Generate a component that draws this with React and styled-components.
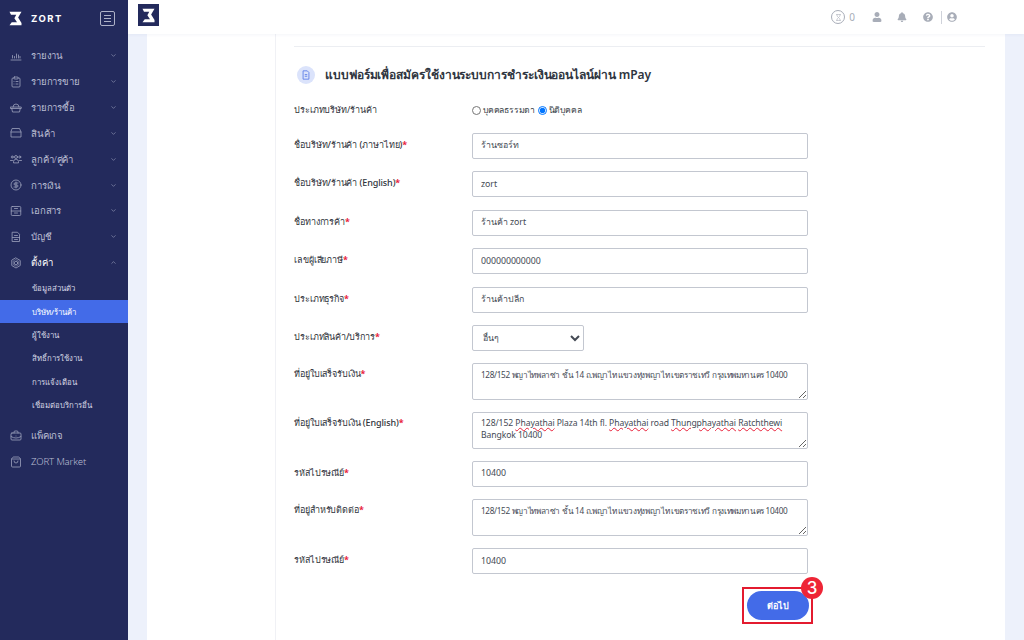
import React from 'react';
import styled, { createGlobalStyle } from 'styled-components';
import { FaUser, FaBell, FaQuestionCircle, FaUserCircle } from 'react-icons/fa';
import { ChevronDown, ChevronUp, ClipboardList, CircleDollarSign, BriefcaseBusiness, ShoppingBag, Hourglass } from 'lucide-react';

const Global = createGlobalStyle`
  html, body { margin: 0; height: 640px; overflow: hidden; background: #edf1fb; }
  * { box-sizing: border-box; }
  body, input, select, button { font-family: "Noto Sans", "Inter", sans-serif; }
`;
const Shell = styled.div`display: flex; width: 1024px; height: 640px; overflow: hidden;`;
const Sidebar = styled.aside`width: 128px; flex: none; background: #232a5c; color: #b9bdd2; display: flex; flex-direction: column;`;
const Brand = styled.div`height: 43px; display: flex; align-items: center; padding: 0 13px 6px 8px; flex: none;`;
const BrandName = styled.span`margin-left: 8px; font: 700 9.5px "Inter", sans-serif; letter-spacing: 1.5px; color: #fff; flex: 1;`;
const MenuToggle = styled.div`width: 15px; height: 15px; border: 1px solid #aeb2c8; border-radius: 2px; display: flex; flex-direction: column; justify-content: center; gap: 2px; padding: 0 3px;
  i { display: block; height: 1px; background: #aeb2c8; }`;
const Menu = styled.nav`display: flex; flex-direction: column;`;
const Item = styled.div`height: 25.85px; display: flex; align-items: center; padding: 0 11px 0 10px; font-size: 9.6px; letter-spacing: -.15px; color: ${p => p.$open ? '#fff' : '#b9bdd2'}; font-weight: ${p => p.$open ? 500 : 300};
  span { margin-left: 9px; flex: 1; white-space: nowrap; }
  svg { flex: none; color: #9da2bd; }`;
const Sub = styled.div`height: 23.4px; display: flex; align-items: center; padding-left: 32px; font-size: 7.8px; font-weight: 500; white-space: nowrap; color: ${p => p.$active ? '#fff' : '#d6d8e4'}; background: ${p => p.$active ? '#436be8' : 'transparent'};`;
const SubGroup = styled.div`display: flex; flex-direction: column; margin: 1px 0 6px;`;
const Main = styled.div`flex: 1; display: flex; flex-direction: column; min-width: 0;`;
const TopBar = styled.header`height: 34px; flex: none; background: #fff; display: flex; align-items: center; padding: 0 67px 0 10px; box-shadow: 0 1px 3px rgba(60,80,140,.06); position: relative; z-index: 1;`;
const TopLogo = styled.div`width: 21px; height: 22px; background: #232a5c; display: flex; align-items: center; justify-content: center; align-self: flex-start; margin-top: 4px;`;
const TopIcons = styled.div`margin-left: auto; display: flex; align-items: center; color: #a8adb8; font-size: 10px;`;
const Ring = styled.div`width: 14px; height: 14px; border: 1px solid #a8adb8; border-radius: 50%; display: flex; align-items: center; justify-content: center; margin-right: 4px;`;
const Count = styled.span`margin-right: 17px;`;
const Gap = styled.span`display: flex; margin-right: ${p => p.$m}px;`;
const Divider = styled.i`width: 1px; height: 13px; background: #cfd2da; margin-right: 5px;`;
const Content = styled.main`flex: 1; padding: 0 19px; min-height: 0;`;
const Card = styled.section`background: #fff; height: 100%; display: flex;`;
const Side = styled.div`width: 129px; flex: none; border-right: 1px solid #f0f1f5;`;
const Body = styled.div`flex: 1; padding: 12px 20px 0 18px;`;
const Rule = styled.div`height: 1px; background: #eceef2; margin-bottom: 17px;`;
const Title = styled.div`display: flex; align-items: center; margin: 0 0 13px 3px; height: 22px;`;
const Badge = styled.div`width: 18px; height: 18px; border-radius: 50%; background: #dbe3fb; color: #5577e6; display: flex; align-items: center; justify-content: center; margin-right: 10px;`;
const TitleText = styled.h2`margin: 0; font-size: 12px; line-height: 22px; font-weight: 600; letter-spacing: -.08px; color: #2f3540; white-space: nowrap;`;
const Form = styled.form`display: flex; flex-direction: column; gap: 12.4px;`;
const Row = styled.div`display: grid; grid-template-columns: 178px 336px; align-items: start; min-height: ${p => p.$h || 26}px; height: ${p => p.$h || 26}px;`;
const Label = styled.label`font-size: 9px; letter-spacing: -.1px; line-height: ${p => p.$lh || 22}px; color: #30343c; font-weight: ${p => p.$b ? 500 : 400}; white-space: nowrap;
  b { color: #e8213a; font-weight: 700; }`;
const Input = styled.input`width: 336px; height: 26px; border: 1px solid #c3c7d0; border-radius: 2px; padding: 0 8px 1px; font-size: 8.8px; letter-spacing: -.05px; color: #444a54; background: #fff; outline: none;`;
const Select = styled.select`width: 112px; height: 26px; border: 1px solid #c3c7d0; border-radius: 2px; padding: 0 6px; font-size: 8.8px; color: #444a54; background: #fff;`;
const Area = styled.div`width: 336px; height: 36.4px; border: 1px solid #c3c7d0; border-radius: 2px; padding: 4px 8px 0; font-size: ${p => p.$thai ? 8.2 : 8.6}px; letter-spacing: ${p => p.$thai ? -.34 : -.08}px; line-height: ${p => p.$thai ? 14 : 12}px; color: #444a54; resize: vertical; overflow: auto; background: #fff; white-space: ${p => p.$thai ? 'nowrap' : 'normal'};
  u { text-decoration: underline wavy #e8213a 1px; text-underline-offset: 1px; }`;
const Radios = styled.div`display: flex; align-items: center; height: 22px; font-size: 8.6px; letter-spacing: -.2px; color: #3a3f48;
  input { margin: 0 2px 0 0; width: 9px; height: 9px; }
  label { display: flex; align-items: center; margin-right: 2.5px; }`;
const Actions = styled.div`display: flex; justify-content: flex-end; padding: 13px 172px 0 0;`;
const Marked = styled.div`position: relative; width: 71px; height: 37px; border: 2px solid #e31b2f; display: flex; align-items: center; justify-content: center;`;
const Next = styled.button`width: 62px; height: 29px; border: 0; border-radius: 15px; background: #436be8; color: #fff; font-size: 9px; font-weight: 600;`;
const Step = styled.span`position: absolute; right: -12px; top: -12px; width: 22px; height: 22px; border-radius: 50%; background: #ee2536; color: #fff; font: 500 17px/22px "Inter", sans-serif; text-align: center;`;

const Logo = ({ s = 20, c = '#fff' }) => (
  <svg width={s} height={s} viewBox="0 0 20 20" fill={c}>
    <path d="M2 1H18L13.5 8.5L18 16V19H2L5 15H12L8.5 9.5L11 5H4Z" />
  </svg>
);
const Ico = ({ children }) => (
  <svg width="12" height="12" viewBox="0 0 24 24" fill="none" stroke="currentColor" strokeWidth="1.6" strokeLinecap="round" strokeLinejoin="round">{children}</svg>
);
const IcReport = () => <Ico><path d="M2 20h20M5 16v-5M9 16v-3M13 16V8M17 16v-6M20 16v-3" /></Ico>;
const IcBasket = () => <Ico><path d="M6 10a6 6 0 0 1 12 0" /><path d="M1.5 10h21v3h-21z" /><path d="M3.5 13l1.5 7h14l1.5-7" /></Ico>;
const IcBox = () => <Ico><path d="M5 3h14l3 7v10H2V10z" /><path d="M2 10h20" /></Ico>;
const IcGroup = () => <Ico><circle cx="12" cy="8" r="3" /><path d="M7 19v-2a4 4 0 0 1 4-4h2a4 4 0 0 1 4 4v2z" /><circle cx="4.5" cy="8" r="2" /><circle cx="19.5" cy="8" r="2" /><path d="M1 15h4M19 15h4" /></Ico>;
const IcDoc = () => <Ico><rect x="2.5" y="3" width="19" height="18" rx="2" /><path d="M2.5 12h19M9 7h6M9 16h6" /></Ico>;
const IcAcc = () => <Ico><path d="M5 2.500h10l4 4V21H5z" /><path d="M9 9h6M5 13h14M9 17h6" /></Ico>;
const IcGear = () => <Ico><path d="M12 2l8.500 5v10L12 22l-8.500-5V7z" /><circle cx="12" cy="12" r="3.500" /><path d="M12 5.500l5.500 3.200v6.600L12 18.500l-5.500-3.200V8.700z" strokeWidth="1" /></Ico>;
const IcForm = () => <svg width="10" height="10" viewBox="0 0 24 24" fill="none" stroke="currentColor" strokeWidth="2"><path d="M5 2h10l4 4v16H5z" /><path d="M9 11h6M9 15h6" /></svg>;

const menuTop = [
  [<IcReport />, 'รายงาน'], [<ClipboardList size={12} strokeWidth={1.6} />, 'รายการขาย'], [<IcBasket />, 'รายการซื้อ'], [<IcBox />, 'สินค้า'],
  [<IcGroup />, 'ลูกค้า/คู่ค้า'], [<CircleDollarSign size={12} strokeWidth={1.6} />, 'การเงิน'], [<IcDoc />, 'เอกสาร'], [<IcAcc />, 'บัญชี'],
];
const subs = ['ข้อมูลส่วนตัว', 'บริษัท/ร้านค้า', 'ผู้ใช้งาน', 'สิทธิ์การใช้งาน', 'การแจ้งเตือน', 'เชื่อมต่อบริการอื่น'];
const Req = () => <b>*</b>;
const Field = ({ label, value }) => (
  <Row><Label $b $lh={23}>{label}<Req /></Label><Input defaultValue={value} spellCheck={false} /></Row>
);
const AreaField = ({ label, thai, children }) => (
  <Row $h={36.4}><Label $b>{label}<Req /></Label><Area $thai={thai}>{children}</Area></Row>
);
const thaiAddress = '128/152 พญาไทพลาซ่า ชั้น 14 ถ.พญาไท แขวงทุ่งพญาไท เขตราชเทวี กรุงเทพมหานคร 10400';

export default function App() {
  return (
    <Shell>
      <Global />
      <Sidebar>
        <Brand><Logo s={15} /><BrandName>ZORT</BrandName><MenuToggle><i /><i /><i /></MenuToggle></Brand>
        <Menu>
          {menuTop.map(([icon, t]) => (
            <Item key={t}>{icon}<span>{t}</span><ChevronDown size={7} /></Item>
          ))}
          <Item $open><IcGear /><span>ตั้งค่า</span><ChevronUp size={7} /></Item>
          <SubGroup>{subs.map((s, i) => <Sub key={s} $active={i === 1}>{s}</Sub>)}</SubGroup>
          <Item><BriefcaseBusiness size={12} strokeWidth={1.6} /><span>แพ็คเกจ</span></Item>
          <Item><ShoppingBag size={12} strokeWidth={1.6} /><span>ZORT Market</span></Item>
        </Menu>
      </Sidebar>
      <Main>
        <TopBar>
          <TopLogo><Logo s={15} /></TopLogo>
          <TopIcons>
            <Ring><Hourglass size={7} /></Ring><Count>0</Count>
            <Gap $m={15}><FaUser size={10} /></Gap>
            <Gap $m={16}><FaBell size={10} /></Gap>
            <Gap $m={8}><FaQuestionCircle size={10} /></Gap>
            <Divider />
            <Gap $m={0}><FaUserCircle size={10} /></Gap>
          </TopIcons>
        </TopBar>
        <Content>
          <Card>
            <Side />
            <Body>
              <Rule />
              <Title><Badge><IcForm /></Badge><TitleText>แบบฟอร์มเพื่อสมัครใช้งานระบบการชำระเงินออนไลน์ผ่าน mPay</TitleText></Title>
              <Form>
                <Row $h={21.6}>
                  <Label>ประเภทบริษัท/ร้านค้า</Label>
                  <Radios>
                    <label><input type="radio" name="t" />บุคคลธรรมดา</label>
                    <label><input type="radio" name="t" defaultChecked />นิติบุคคล</label>
                  </Radios>
                </Row>
                <Field label="ชื่อบริษัท/ร้านค้า (ภาษาไทย)" value="ร้านซอร์ท" />
                <Field label="ชื่อบริษัท/ร้านค้า (English)" value="zort" />
                <Field label="ชื่อทางการค้า" value="ร้านค้า zort" />
                <Field label="เลขผู้เสียภาษี" value="000000000000" />
                <Field label="ประเภทธุรกิจ" value="ร้านค้าปลีก" />
                <Row><Label $b $lh={23}>ประเภทสินค้า/บริการ<Req /></Label><Select defaultValue="o"><option value="o">อื่นๆ</option></Select></Row>
                <AreaField label="ที่อยู่ใบเสร็จรับเงิน" thai>{thaiAddress}</AreaField>
                <AreaField label="ที่อยู่ใบเสร็จรับเงิน (English)">128/152 <u>Phayathai</u> Plaza 14th fl. <u>Phayathai</u> road <u>Thungphayathai</u> <u>Ratchthewi</u> Bangkok 10400</AreaField>
                <Field label="รหัสไปรษณีย์" value="10400" />
                <AreaField label="ที่อยู่สำหรับติดต่อ" thai>{thaiAddress}</AreaField>
                <Field label="รหัสไปรษณีย์" value="10400" />
              </Form>
              <Actions><Marked><Next type="button">ต่อไป</Next><Step>3</Step></Marked></Actions>
            </Body>
          </Card>
        </Content>
      </Main>
    </Shell>
  );
}
